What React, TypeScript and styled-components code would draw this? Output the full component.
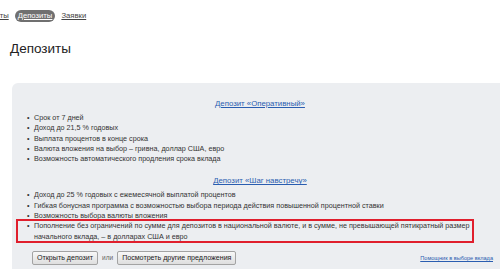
import React from 'react';
import styled, { createGlobalStyle } from 'styled-components';

const GlobalStyle = createGlobalStyle`
  html, body {
    margin: 0;
    padding: 0;
    background: #fff;
  }
  body {
    width: 500px;
    height: 269px;
    overflow: hidden;
    font-family: "Liberation Sans", Arial, sans-serif;
    color: #333;
  }
`;

const Nav = styled.nav`
  display: flex;
  align-items: center;
  gap: 6px;
  height: 14px;
  margin: 9px 0 0 -22px;
  font-size: 7.7px;
`;

const NavLink = styled.a<{ $active?: boolean }>`
  color: ${(p) => (p.$active ? '#fff' : '#444')};
  background: ${(p) => (p.$active ? '#707070' : 'transparent')};
  border-radius: 6px;
  padding: ${(p) => (p.$active ? '1px 3px' : '1px 0')};
  text-decoration: underline;
  line-height: 10px;
`;

const Title = styled.h1`
  margin: 18px 0 0 10px;
  font-size: 13.5px;
  line-height: 16px;
  font-weight: normal;
  color: #222;
`;

const Panel = styled.section`
  width: 481px;
  margin: 26px 0 0 12px;
  padding: 16px 15px 6px 0;
  background: #eceef1;
  border-radius: 6px 0 0 0;
`;

const Block = styled.div`
  & + & {
    margin-top: 12px;
  }
`;

const DepositLink = styled.a`
  display: block;
  text-align: center;
  font-size: 7.8px;
  line-height: 10px;
  color: #2a5db0;
  text-decoration: underline;
  margin-bottom: 4px;
  padding-left: 15px;
`;

const List = styled.ul`
  list-style: none;
  margin: 0;
  padding: 0 0 0 15px;
  font-size: 7.2px;
  line-height: 10.3px;
  color: #333;
`;

const Item = styled.li<{ $marked?: boolean }>`
  position: relative;
  padding-left: 7px;

  &::before {
    content: '•';
    position: absolute;
    left: 0;
    top: 0;
  }

  ${(p) =>
    p.$marked &&
    `
    &::after {
      content: '';
      position: absolute;
      left: -11px;
      right: 19px;
      top: -2px;
      bottom: -1px;
      border: 2px solid #e01f2d;
    }
  `}
`;

const Actions = styled.div`
  display: flex;
  align-items: center;
  margin-top: 9px;
  padding-left: 20px;
`;

const Button = styled.button`
  font-family: inherit;
  font-size: 7.1px;
  line-height: 12px;
  color: #222;
  padding: 0 4px;
  border: 1px solid #a3a3a3;
  border-radius: 2px;
  background: linear-gradient(#f8f8f8, #dedede);
  cursor: pointer;
`;

const Or = styled.span`
  font-size: 6.5px;
  color: #666;
  margin: 0 4px;
`;

const Helper = styled.a`
  margin-left: auto;
  font-size: 5.6px;
  color: #2a5db0;
  text-decoration: underline;
`;

export default function App() {
  return (
    <>
      <GlobalStyle />
      <Nav>
        <NavLink>Кредиты</NavLink>
        <NavLink $active>Депозиты</NavLink>
        <NavLink>Заявки</NavLink>
      </Nav>
      <Title>Депозиты</Title>
      <Panel>
        <Block>
          <DepositLink>Депозит «Оперативный»</DepositLink>
          <List>
            <Item>Срок от 7 дней</Item>
            <Item>Доход до 21,5 % годовых</Item>
            <Item>Выплата процентов в конце срока</Item>
            <Item>Валюта вложения на выбор – гривна, доллар США, евро</Item>
            <Item>Возможность автоматического продления срока вклада</Item>
          </List>
        </Block>
        <Block>
          <DepositLink>Депозит «Шаг навстречу»</DepositLink>
          <List>
            <Item>Доход до 25 % годовых с ежемесячной выплатой процентов</Item>
            <Item>
              Гибкая бонусная программа с возможностью выбора периода действия
              повышенной процентной ставки
            </Item>
            <Item>Возможность выбора валюты вложения</Item>
            <Item $marked>
              Пополнение без ограничений по сумме для депозитов в национальной
              валюте, и в сумме, не превышающей пятикратный размер начального
              вклада, – в долларах США и евро
            </Item>
          </List>
        </Block>
        <Actions>
          <Button>Открыть депозит</Button>
          <Or>или</Or>
          <Button>Посмотреть другие предложения</Button>
          <Helper>Помощник в выборе вклада</Helper>
        </Actions>
      </Panel>
    </>
  );
}
